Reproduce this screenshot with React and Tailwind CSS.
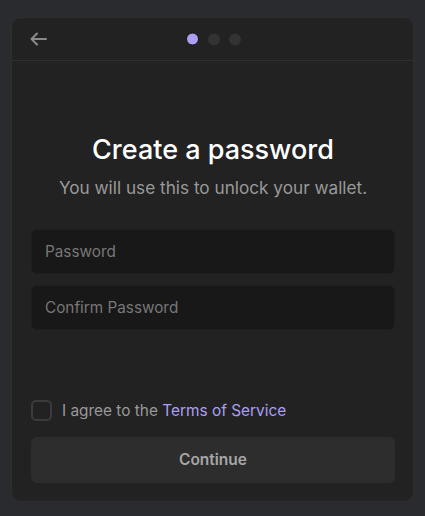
import React, { useState } from "react";

const font = { fontFamily: "Inter, 'Noto Sans', sans-serif" };

const App = () => {
  const [agreed, setAgreed] = useState(false);

  return (
    <div className="min-h-[516px] w-full bg-[#2a2b2f] px-[11px] pt-[17px] pb-[14px]" style={font}>
      <div className="flex h-[485px] flex-col rounded-[10px] border border-[#2e2e30] bg-[#222222]">
        {/* Header */}
        <div className="relative flex h-[43px] items-center border-b border-[#2f2f2f] px-[18px]">
          <button className="text-[#8a8a8a]">
            <svg width="17" height="14" viewBox="0 0 17 14" fill="none" stroke="currentColor" strokeWidth="2" strokeLinecap="round" strokeLinejoin="round">
              <path d="M16 7H2" />
              <path d="M7 1.5L1.5 7 7 12.5" />
            </svg>
          </button>
          <div className="absolute left-1/2 top-1/2 flex -translate-x-1/2 -translate-y-1/2 items-center gap-[9px] pl-[1px]">
            <span className="h-[13px] w-[13px] rounded-full border border-[#151515] bg-[#ab9ff2]" />
            <span className="h-[12px] w-[12px] rounded-full bg-[#333333]" />
            <span className="h-[12px] w-[12px] rounded-full bg-[#333333]" />
          </div>
        </div>

        {/* Body */}
        <div className="flex flex-1 flex-col pl-[19px] pr-[18px] pb-[18px]">
          <h1 className="mt-[72px] text-center text-[27px] leading-[34px] font-medium text-white">
            Create a password
          </h1>
          <p className="mt-[10px] text-center text-[17.2px] leading-[22px] text-[#999999]">
            You will use this to unlock your wallet.
          </p>

          <div className="mt-[30px] flex flex-col gap-[11px]">
            <input
              type="password"
              placeholder="Password"
              className="h-[45px] w-full rounded-[6px] border border-[#1e1e1e] bg-[#181818] px-[13px] text-[15.3px] text-white outline-none placeholder:text-[#777777]"
            />
            <input
              type="password"
              placeholder="Confirm Password"
              className="h-[45px] w-full rounded-[6px] border border-[#1e1e1e] bg-[#181818] px-[13px] text-[15.3px] text-white outline-none placeholder:text-[#777777]"
            />
          </div>

          <div className="mt-auto">
            <label className="flex cursor-pointer items-center gap-[10px]">
              <span
                onClick={() => setAgreed(!agreed)}
                className={`h-[21px] w-[21px] rounded-[5px] border-2 ${agreed ? "border-[#ab9ff2] bg-[#ab9ff2]" : "border-[#3b3b3b] bg-[#222222]"}`}
              />
              <span className="text-[15.4px] text-[#999999]">
                I agree to the <span className="text-[#ab9ff2]">Terms of Service</span>
              </span>
            </label>
            <button className="mt-[15px] h-[46px] w-full rounded-[6px] bg-[#2d2d2d] text-[15.5px] font-semibold text-[#a6a6a6]">
              Continue
            </button>
          </div>
        </div>
      </div>
    </div>
  );
};

export default App;
